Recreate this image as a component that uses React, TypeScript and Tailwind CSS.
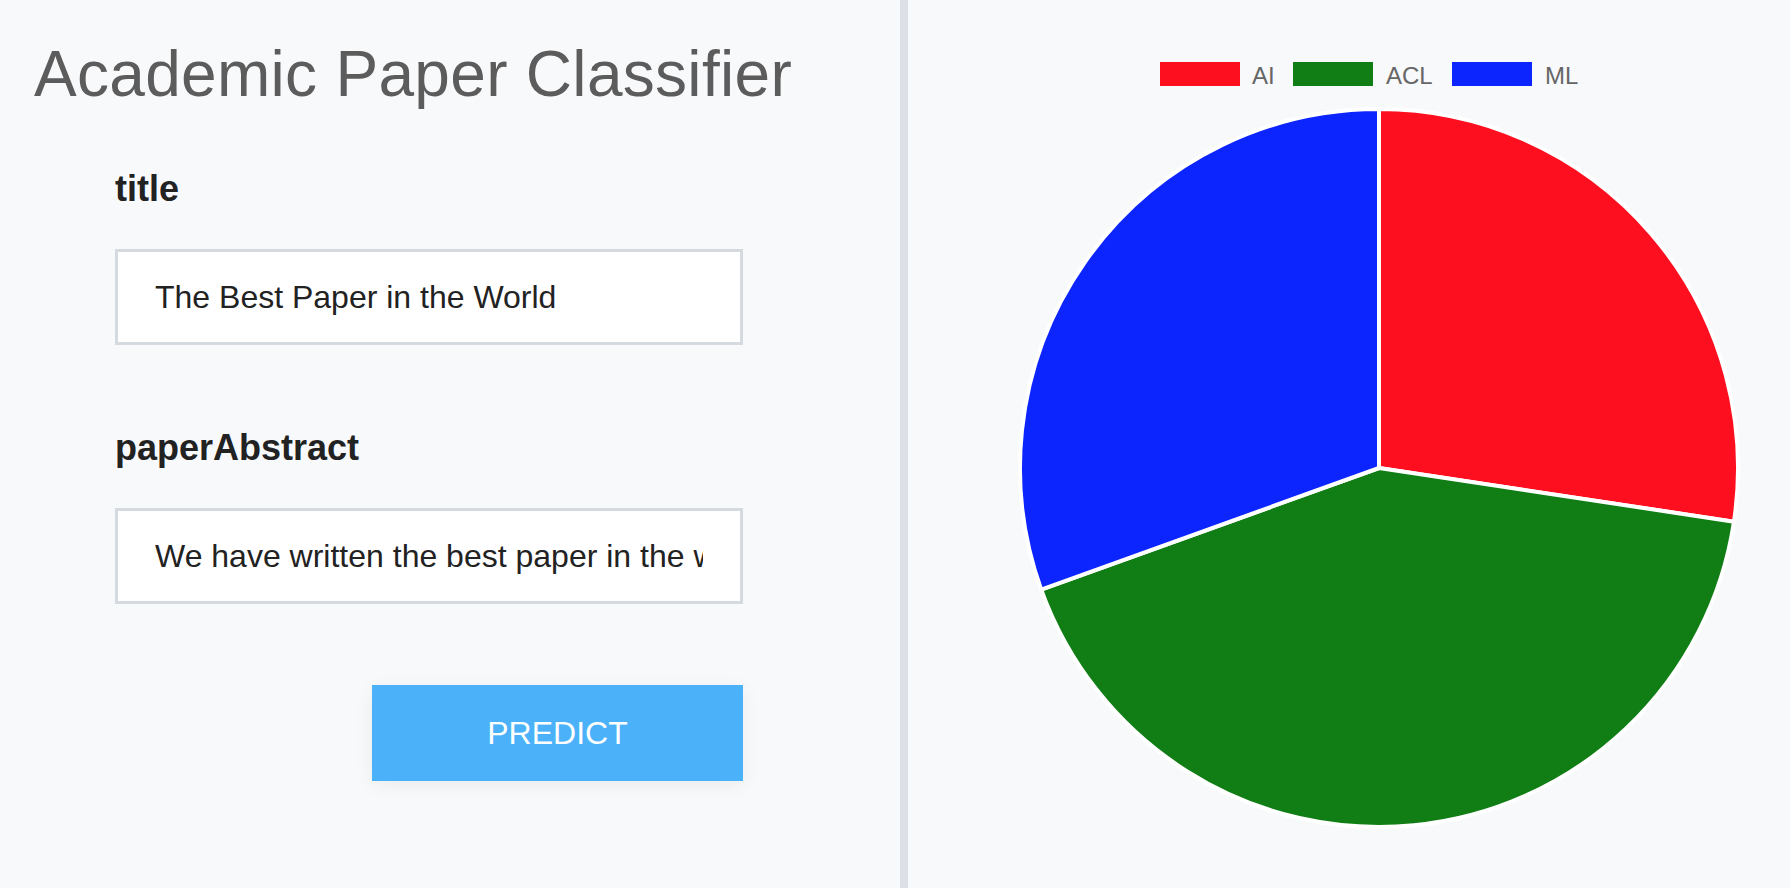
import React from 'react'

type Slice = {
  label: string
  color: string
  d: string
}

// pie centre (471, 468), r 359, angles measured clockwise from 12 o'clock
const slices: Slice[] = [
  {
    label: 'AI',
    color: '#fd0f1f',
    d: 'M 471 468 L 471 109 A 359 359 0 0 1 825.96 521.68 Z'
  },
  {
    label: 'ACL',
    color: '#107e14',
    d: 'M 471 468 L 825.96 521.68 A 359 359 0 0 1 133.22 589.61 Z'
  },
  {
    label: 'ML',
    color: '#0c24fd',
    d: 'M 471 468 L 133.22 589.61 A 359 359 0 0 1 471 109 Z'
  }
]

const legend = [
  { label: 'AI', color: '#fd0f1f', box: 252, text: 344 },
  { label: 'ACL', color: '#107e14', box: 385, text: 478 },
  { label: 'ML', color: '#0c24fd', box: 544, text: 637 }
]

const Field: React.FC<{ label: string; value: string; labelGap: string }> = ({
  label,
  value,
  labelGap
}) => {
  return (
    <div className={`flex flex-col ${labelGap}`}>
      <label className="text-[36px] leading-[35px] font-bold text-[#222]">
        {label}
      </label>
      <input
        readOnly
        value={value}
        className="mt-[43px] h-[96px] w-[628px] border-[3px] border-[#d4dae0] bg-white px-[37px] text-[32px] text-[#222] outline-none"
      />
    </div>
  )
}

const PieChart: React.FC<{}> = () => {
  return (
    <svg width="882" height="888" viewBox="0 0 882 888" className="block">
      {legend.map((item) => (
        <g key={item.label}>
          <rect x={item.box} y={62} width={80} height={24} fill={item.color} />
          <text
            x={item.text}
            y={84}
            fontSize={24}
            fill="#666"
            fontFamily="'Liberation Sans', Arial, sans-serif"
          >
            {item.label}
          </text>
        </g>
      ))}
      {slices.map((slice) => (
        <path
          key={slice.label}
          d={slice.d}
          fill={slice.color}
          stroke="#fff"
          strokeWidth={4}
          strokeLinejoin="round"
        />
      ))}
    </svg>
  )
}

export default function App() {
  return (
    <div className="flex h-[888px] w-full overflow-hidden bg-[#f8f9fb] font-['Liberation_Sans',Arial,sans-serif]">
      <div className="flex w-[900px] shrink-0 flex-col">
        <h1 className="pl-[34px] pt-[42px] text-[64px] leading-[64px] font-light tracking-[0.3px] text-[#5c5c5c]">
          Academic Paper Classifier
        </h1>

        <div className="flex flex-col pl-[115px]">
          <Field
            label="title"
            value="The Best Paper in the World"
            labelGap="mt-[65px]"
          />
          <Field
            label="paperAbstract"
            value="We have written the best paper in the world and everyone should read it"
            labelGap="mt-[85px]"
          />
          <div className="mt-[81px] flex w-[628px] justify-end">
            <button className="h-[96px] w-[371px] bg-[#4bb2f9] text-[32px] text-white shadow-[0_4px_18px_rgba(0,0,0,0.06)]">
              PREDICT
            </button>
          </div>
        </div>
      </div>

      <div className="w-[8px] shrink-0 bg-[#dde1e7]" />

      <div className="flex-1">
        <PieChart />
      </div>
    </div>
  )
}
